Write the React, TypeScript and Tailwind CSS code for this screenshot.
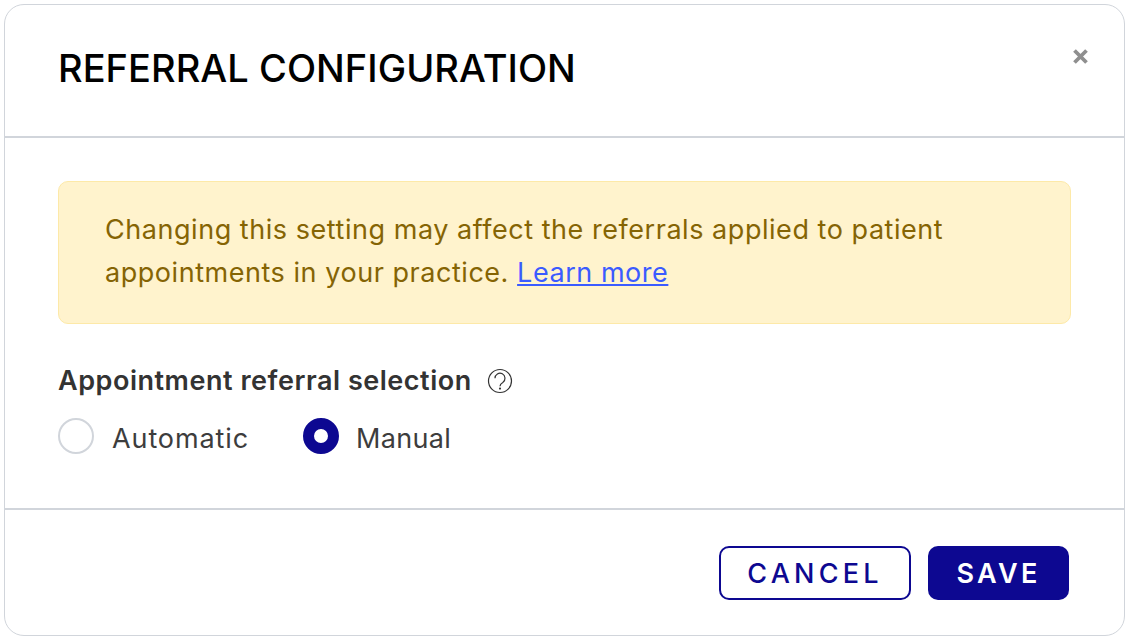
import React, { useState } from "react";

const App = () => {
  const [mode, setMode] = useState("manual");

  return (
    <div className="w-[1128px] h-[639px] bg-white p-1 font-['Inter',sans-serif]">
      <div className="relative flex flex-col w-[1121px] h-[632px] bg-white border border-[#d1d5db] rounded-[20px]">
        {/* Header */}
        <div className="h-[133px] pl-[53px] pt-[40px] border-b-2 border-[#d1d5db]">
          <h1 className="text-[38px] leading-[46px] font-medium text-black tracking-[0.04px]">REFERRAL CONFIGURATION</h1>
        </div>
        <button className="absolute right-[36px] top-[44px] text-[#8f8f8f]">
          <svg width="15" height="15" viewBox="0 0 15 15" fill="none" stroke="currentColor" strokeWidth="3.8">
            <path d="M1.5 1.5L13.5 13.5M13.5 1.5L1.5 13.5" />
          </svg>
        </button>

        {/* Body */}
        <div className="flex-1 px-[53px] pt-[43px]">
          <div className="w-[1013px] h-[143px] pl-[46px] pr-[40px] pt-[26px] bg-[#fff3cd] border border-[#fde9a8] rounded-[10px] text-[27px] leading-[43px] tracking-[0.54px] text-[#856404]">
            Changing this setting may affect the referrals applied to patient appointments in your practice.{" "}
            <a href="#" className="text-[#3b5bff] underline">Learn more</a>
          </div>
          <div className="flex items-center mt-[38px] h-[38px]">
            <span className="text-[27px] font-semibold text-[#333333] tracking-[0.53px]">Appointment referral selection</span>
            <svg className="ml-[15px]" width="26" height="26" viewBox="0 0 26 26" fill="none" stroke="#333333" strokeWidth="1.2">
              <circle cx="13" cy="13" r="11.5" />
              <path d="M8 10.3a5 5 0 1 1 7.8 4.1c-1.9 1.1-2.8 1.9-2.8 3.8" />
              <circle cx="13" cy="20.6" r="0.5" />
            </svg>
          </div>
          <div className="flex items-start mt-[18px] gap-[54px]">
            <label className="flex items-start gap-[18px] cursor-pointer" onClick={() => setMode("automatic")}>
              <span className={mode === "automatic" ? "w-[36px] h-[36px] rounded-full border-[11px] border-[#0d0891] bg-white" : "w-[36px] h-[36px] rounded-full border-2 border-[#d1d5db] bg-white"} />
              <span className="text-[27px] leading-[41px] tracking-[0.9px] text-[#3d3d3d]">Automatic</span>
            </label>
            <label className="flex items-start gap-[17px] cursor-pointer" onClick={() => setMode("manual")}>
              <span className={mode === "manual" ? "w-[36px] h-[36px] rounded-full border-[11px] border-[#0d0891] bg-white" : "w-[36px] h-[36px] rounded-full border-2 border-[#d1d5db] bg-white"} />
              <span className="text-[27px] leading-[41px] tracking-[0.3px] text-[#3d3d3d]">Manual</span>
            </label>
          </div>
        </div>

        {/* Footer */}
        <div className="h-[127px] flex justify-end items-start gap-[17px] pt-[36px] pr-[55px] border-t-2 border-[#d1d5db]">
          <button className="w-[192px] h-[54px] pt-[2px] rounded-[10px] border-2 border-[#0d0891] bg-white text-[#0d0891] text-[27px] font-medium tracking-[4.2px]">CANCEL</button>
          <button className="w-[141px] h-[54px] pt-[2px] rounded-[10px] bg-[#0d0891] text-white text-[27px] font-semibold tracking-[3.3px]">SAVE</button>
        </div>
      </div>
    </div>
  );
};

export default App;
